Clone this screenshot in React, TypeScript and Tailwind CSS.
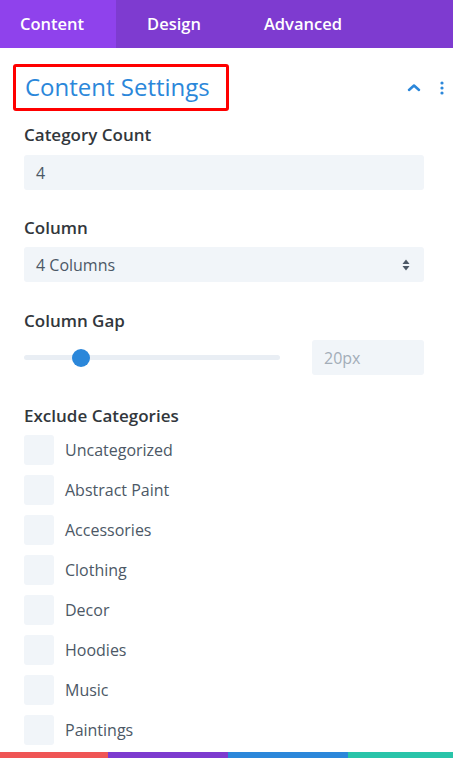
const categories = ['Uncategorized', 'Abstract Paint', 'Accessories', 'Clothing', 'Decor', 'Hoodies', 'Music', 'Paintings']

export default function App() {
  return (
    <div className="flex h-[758px] w-[453px] flex-col overflow-hidden bg-white font-['Open_Sans',sans-serif]">
      {/* Tabs */}
      <div className="flex h-12 shrink-0 bg-[#7e3bd0] text-[16.5px] font-semibold text-white">
        <div className="flex items-center bg-[#8f42ec] pl-5 pr-8">Content</div>
        <div className="flex items-center pl-[31px] pr-8">Design</div>
        <div className="flex items-center pl-[31px] pr-8">Advanced</div>
      </div>

      {/* Section header */}
      <div className="mt-4 flex items-center justify-between pl-[13px] pr-[9px]">
        <div className="flex h-[47px] w-[216px] items-center rounded-[3px] border-[3px] border-[#ff0000] pl-[9px]">
          <h2 className="-mt-px text-[24px] font-normal leading-none text-[#2b87da]">Content Settings</h2>
        </div>
        <div className="flex items-center gap-[19px]">
          <svg width="14" height="9" viewBox="0 0 14 9" fill="none">
            <path d="M2 7 L7 2.5 L12 7" stroke="#2b87da" strokeWidth="2.5" strokeLinecap="round" strokeLinejoin="round" />
          </svg>
          <svg width="4" height="14" viewBox="0 0 4 14">
            <circle cx="2" cy="2" r="1.6" fill="#2b87da" />
            <circle cx="2" cy="7" r="1.6" fill="#2b87da" />
            <circle cx="2" cy="12" r="1.6" fill="#2b87da" />
          </svg>
        </div>
      </div>

      <div className="flex flex-col pl-6 pr-[29px]">
        {/* Category Count */}
        <label className="mt-3 text-[17px] font-semibold leading-6 text-[#32373c]">Category Count</label>
        <div className="mt-2 flex h-[35px] items-center rounded-[3px] bg-[#f1f5f9] px-3 text-[16px] text-[#4c5866]">4</div>

        {/* Column */}
        <label className="mt-[26px] text-[17px] font-semibold leading-6 text-[#32373c]">Column</label>
        <div className="mt-[7px] flex h-[35px] items-center justify-between rounded-[3px] bg-[#f1f5f9] pl-3 pr-[14px] text-[16px] text-[#4c5866]">
          <span>4 Columns</span>
          <svg width="8" height="12" viewBox="0 0 8 12">
            <path d="M4 0.5 L7.5 5 L0.5 5 Z" fill="#4c5866" />
            <path d="M4 11.5 L7.5 7 L0.5 7 Z" fill="#4c5866" />
          </svg>
        </div>

        {/* Column Gap */}
        <label className="mt-[27px] text-[17px] font-semibold leading-6 text-[#32373c]">Column Gap</label>
        <div className="mt-[7px] flex h-[35px] items-center justify-between">
          <div className="relative h-[5px] w-64 rounded-full bg-[#e9eef4]">
            <div className="absolute left-[48px] top-1/2 h-[18px] w-[18px] -translate-y-1/2 rounded-full bg-[#2b87da]" />
          </div>
          <div className="flex h-[35px] w-28 items-center rounded-[3px] bg-[#f1f5f9] px-3 text-[16px] text-[#a3adb8]">20px</div>
        </div>

        {/* Exclude Categories */}
        <label className="mt-[29px] text-[17px] font-semibold leading-6 text-[#32373c]">Exclude Categories</label>
        <div className="mt-[7px] flex flex-col gap-[10px]">
          {categories.map((c) => (
            <div key={c} className="flex items-center gap-[11px]">
              <div className="h-[30px] w-[30px] rounded-[3px] bg-[#f1f5f9]" />
              <span className="text-[16px] text-[#4c5866]">{c}</span>
            </div>
          ))}
        </div>
      </div>

      {/* Bottom color bar */}
      <div className="mt-auto flex h-[6px] shrink-0">
        <div className="w-[108px] bg-[#ef5555]" />
        <div className="w-[120px] bg-[#7d3bcf]" />
        <div className="w-[120px] bg-[#2b87da]" />
        <div className="flex-1 bg-[#29c4a9]" />
      </div>
    </div>
  )
}
